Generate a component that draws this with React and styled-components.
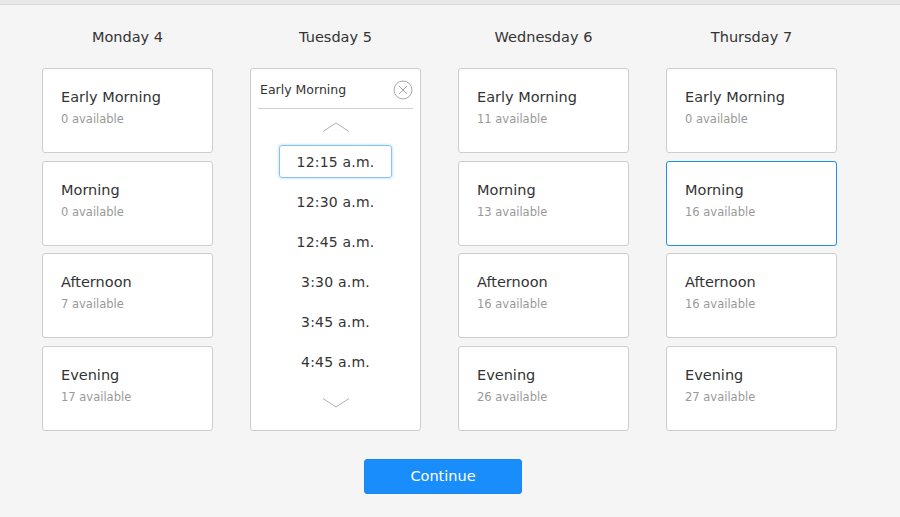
import React from 'react'
import styled, { createGlobalStyle } from 'styled-components'

const GlobalStyle = createGlobalStyle`
  html, body {
    margin: 0;
    padding: 0;
    background: #f5f5f5;
    font-family: "DejaVu Sans", "Liberation Sans", sans-serif;
    color: #333;
  }
`;

const Page = styled.div`
  width: 900px;
  height: 517px;
  box-sizing: border-box;
  border-top: 4px solid #e8e8e8;
  background: #f5f5f5;
`;

const TopLine = styled.div`
  height: 1px;
  background: #d9d9d9;
`;

const Board = styled.div`
  display: grid;
  grid-template-columns: repeat(4, 171px);
  column-gap: 37px;
  padding-left: 42px;
`;

const Column = styled.div`
  display: flex;
  flex-direction: column;
`;

const DayName = styled.div`
  height: 63px;
  line-height: 65px;
  text-align: center;
  font-size: 14.5px;
  color: #333;
`;

const Stack = styled.div`
  display: flex;
  flex-direction: column;
  gap: 7.5px;
  height: 362.5px;
`;

const Card = styled.div`
  height: 85px;
  box-sizing: border-box;
  background: #fff;
  border: 1px solid ${(p) => (p.$selected ? '#1c8fe6' : '#cdcdcd')};
  border-radius: 3px;
  padding: 19px 18px 0;
  cursor: pointer;
`;

const Title = styled.div`
  font-size: 14.5px;
  color: #333;
  line-height: 18px;
`;

const Count = styled.div`
  margin-top: 5px;
  font-size: 11.5px;
  color: #999;
  line-height: 16px;
`;

const Expanded = styled.div`
  flex: 1;
  box-sizing: border-box;
  background: #fff;
  border: 1px solid #cdcdcd;
  border-radius: 3px;
  display: flex;
  flex-direction: column;
`;

const ExpandedHead = styled.div`
  height: 40px;
  margin: 0 7px;
  padding: 2px 0 0 2px;
  box-sizing: border-box;
  border-bottom: 1px solid #cfcfcf;
  display: flex;
  align-items: center;
  justify-content: space-between;
  font-size: 12.5px;
  color: #333;
`;

const Arrow = styled.div`
  height: 36px;
  display: flex;
  align-items: center;
  justify-content: center;
`;

const Slots = styled.div`
  display: flex;
  flex-direction: column;
  align-items: center;
  gap: 7px;
`;

const Slot = styled.div`
  width: 113px;
  height: 33px;
  box-sizing: border-box;
  display: flex;
  align-items: center;
  justify-content: center;
  font-size: 14px;
  letter-spacing: 0.2px;
  color: #333;
  border-radius: 3px;
  border: 1px solid ${(p) => (p.$active ? '#86c5ef' : 'transparent')};
  box-shadow: ${(p) => (p.$active ? '0 0 3px rgba(82, 168, 236, 0.55)' : 'none')};
`;

const Footer = styled.div`
  display: flex;
  justify-content: center;
  padding: 28px 0 0 49px;
  width: 837px;
  box-sizing: border-box;
`;

const Button = styled.button`
  width: 158px;
  height: 35px;
  border: 1px solid #1a86ee;
  border-radius: 3px;
  background: #1a8dfc;
  color: #fff;
  font-family: inherit;
  font-size: 14.5px;
  cursor: pointer;
`;

const CloseIcon = () => (
  <svg width="20" height="20" viewBox="0 0 20 20">
    <circle cx="10" cy="10" r="9" fill="none" stroke="#a8a8a8" strokeWidth="1" />
    <path d="M6 6 L14 14 M14 6 L6 14" stroke="#a8a8a8" strokeWidth="1" />
  </svg>
);

const Chevron = ({ up }) => (
  <svg width="28" height="10" viewBox="0 0 28 10">
    <polyline
      points={up ? '1,9.5 14,1 27,9.5' : '1,0.5 14,9 27,0.5'}
      fill="none"
      stroke="#b0b0b0"
      strokeWidth="1"
    />
  </svg>
);

const days = [
  { name: 'Monday 4', counts: [0, 0, 7, 17] },
  { name: 'Tuesday 5', open: true },
  { name: 'Wednesday 6', counts: [11, 13, 16, 26] },
  { name: 'Thursday 7', counts: [0, 16, 16, 27], selected: 1 },
];

const periods = ['Early Morning', 'Morning', 'Afternoon', 'Evening'];
const times = ['12:15 a.m.', '12:30 a.m.', '12:45 a.m.', '3:30 a.m.', '3:45 a.m.', '4:45 a.m.'];

export default function App() {
  return (
    <Page>
      <GlobalStyle />
      <TopLine />
      <Board>
        {days.map((day) => (
          <Column key={day.name}>
            <DayName>{day.name}</DayName>
            <Stack>
              {day.open ? (
                <Expanded>
                  <ExpandedHead>
                    <span>Early Morning</span>
                    <CloseIcon />
                  </ExpandedHead>
                  <Arrow><Chevron up /></Arrow>
                  <Slots>
                    {times.map((t, i) => (
                      <Slot key={t} $active={i === 0}>{t}</Slot>
                    ))}
                  </Slots>
                  <Arrow style={{ marginTop: 7 }}><Chevron /></Arrow>
                </Expanded>
              ) : (
                periods.map((p, i) => (
                  <Card key={p} $selected={day.selected === i}>
                    <Title>{p}</Title>
                    <Count>{day.counts[i]} available</Count>
                  </Card>
                ))
              )}
            </Stack>
          </Column>
        ))}
      </Board>
      <Footer>
        <Button>Continue</Button>
      </Footer>
    </Page>
  )
}
